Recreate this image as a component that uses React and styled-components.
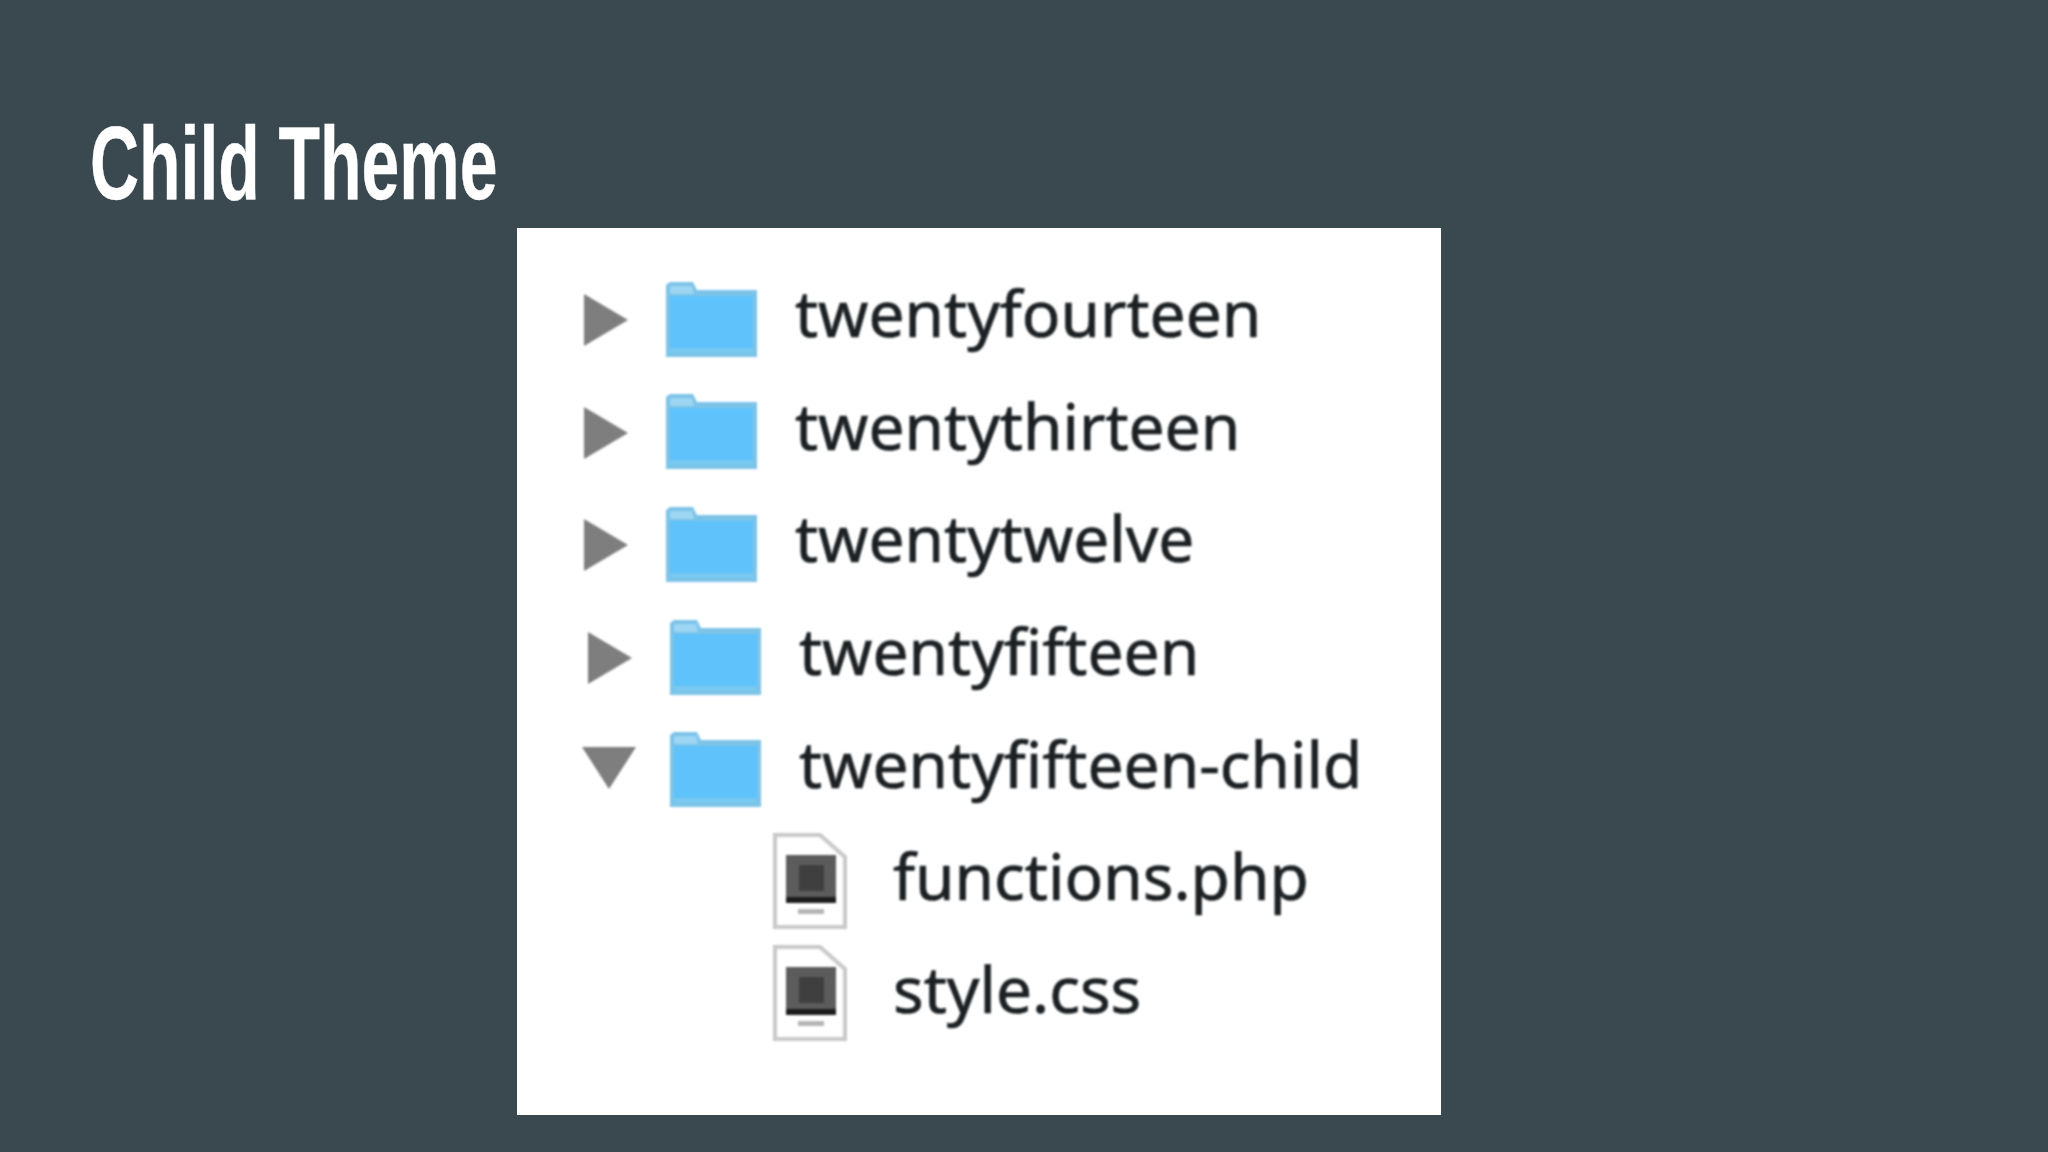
import { createGlobalStyle } from 'styled-components'
import styled from 'styled-components'

const Global = createGlobalStyle`
html, body {
    margin: 0;
    padding: 0;
    background: #3a4950;
}
`;

//slide
const Slide = styled.div`
width: 2048px;
height: 1152px;
background: #3a4950;
overflow: hidden;
`;

//title
const Title = styled.h1`
margin: 0;
padding: 103px 0 0 90px;
height: 125px;
font-family: "Liberation Sans", sans-serif;
font-weight: 700;
font-size: 104px;
line-height: 120px;
color: #ffffff;
white-space: nowrap;
transform: scaleX(0.653);
transform-origin: 90px 0;
-webkit-text-stroke: 0.4px #ffffff;
`;

//white picture
const Panel = styled.div`
margin-left: 517px;
width: 924px;
height: 887px;
box-sizing: border-box;
padding: 34px 0 0 67px;
background: #fff;
`;

const Blurred = styled.div`
filter: blur(1.3px);
`;

const Row = styled.div`
display: flex;
align-items: center;
height: 112.6px;
padding-left: ${p => p.$shift || 0}px;
`;

const Name = styled.span`
margin-left: ${p => p.$gap}px;
padding-bottom: 10px;
font-family: "Noto Sans", sans-serif;
font-size: 64px;
line-height: 100px;
color: #1c2023;
-webkit-text-stroke: 0.7px #1c2023;
white-space: nowrap;
`;

const ArrowIcon = styled.svg`
flex: none;
margin-top: 6px;
margin-left: ${p => (p.$down ? -6 : -2)}px;
margin-right: ${p => (p.$down ? -4 : -8)}px;
`;

const FolderIcon = styled.svg`
flex: none;
margin-top: 2px;
margin-left: 38px;
`;

const DocIcon = styled.svg`
flex: none;
`;

const Arrow = ({ down }) => (
    <ArrowIcon $down={down} width="54" height="54" viewBox="0 0 54 54">
        <path d={down ? 'M0 2H54L27 44Z' : 'M2 0L46 26L2 52Z'} fill="#7e7e7e" />
    </ArrowIcon>
);

const Folder = () => (
    <FolderIcon width="91" height="75" viewBox="0 0 91 75">
        <path d="M4 0H27L31 8H91V75H0V3Z" fill="#7cc3e8" />
        <path d="M4 4H26L28 12H4Z" fill="#9dd6f2" />
        <path d="M4 14H87V66H4Z" fill="#5fc2fb" />
        <path d="M4 66H87V71H4Z" fill="#78c8f0" />
    </FolderIcon>
);

const FileIcon = () => (
    <DocIcon width="75" height="97" viewBox="0 0 75 97">
        <path d="M3 2H48L73 24V94H3Z" fill="#fff" stroke="#c9c9c9" strokeWidth="4" />
        <path d="M14 22H64V68H14Z" fill="#5c5c5c" />
        <path d="M27 32H52V58H27Z" fill="#3f3f3f" />
        <path d="M14 64H64V70H14Z" fill="#1c1c1c" />
        <path d="M26 76H52V81H26Z" fill="#b5b5b5" />
    </DocIcon>
);

const folders = [
    { name: 'twentyfourteen', shift: 0 },
    { name: 'twentythirteen', shift: 0 },
    { name: 'twentytwelve', shift: 0 },
    { name: 'twentyfifteen', shift: 4 },
    { name: 'twentyfifteen-child', shift: 4, open: true },
];

const files = ['functions.php', 'style.css'];

const App = () => {
    return (
        <Slide>
            <Global />
            <Title>Child Theme</Title>
            <Panel>
                <Blurred>
                    {folders.map(f => (
                        <Row key={f.name} $shift={f.shift}>
                            <Arrow down={f.open} />
                            <Folder />
                            <Name $gap={38}>{f.name}</Name>
                        </Row>
                    ))}
                    {files.map(f => (
                        <Row key={f} $shift={188}>
                            <FileIcon />
                            <Name $gap={46}>{f}</Name>
                        </Row>
                    ))}
                </Blurred>
            </Panel>
        </Slide>
    );
};

export default App;
